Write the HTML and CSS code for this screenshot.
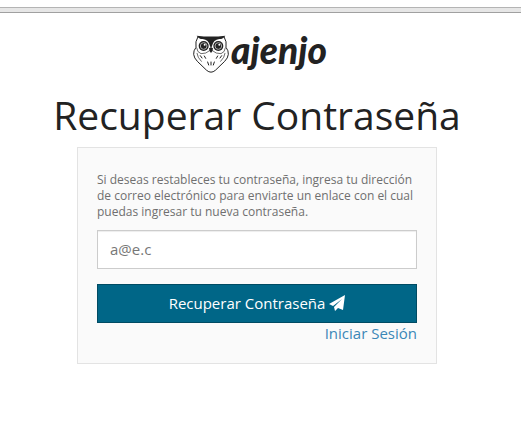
FILE: index.html
```html
<!DOCTYPE html>
<html lang="es">
<head>
<meta charset="utf-8">
<meta name="viewport" content="width=device-width, initial-scale=1">
<title>Recuperar Contraseña</title>
<link rel="stylesheet" href="styles.css">
</head>
<body>
<div class="topbar"></div>
<main class="page">
  <div class="logo">
    <svg class="owl" viewBox="0 0 114 120" aria-hidden="true">
      <g fill="none" stroke="#222" stroke-width="3" stroke-linecap="round" stroke-linejoin="round">
        <path d="M17 10Q9 22 12 40Q4 50 5 61Q6 72 16 82L44 109Q57 120 70 109L98 82Q108 72 109 61Q110 50 102 40Q105 22 97 10"/>
        <path d="M14 42Q15 55 27 59Q42 60 53 50M100 42Q99 55 87 59Q72 60 61 50" stroke-width="2"/>
        <path d="M15 58Q16 70 28 82M99 58Q98 70 86 82" stroke-width="2"/>
        <path d="M25 65l5 7M37 66l4 7M89 65l-5 7M77 66l-4 7M47 84l3 9M57 84v9M67 84l-3 9"/>
      </g>
      <path fill="#222" d="M14 5Q57 10 100 5Q94 15 82 15Q64 17 60 36L57 44L54 36Q50 17 32 15Q20 15 14 5Z"/>
      <path fill="#222" d="M51 43Q57 38 63 43Q63 51 57 57Q51 51 51 43Z"/>
      <circle cx="35" cy="36" r="15" fill="#222"/>
      <circle cx="79" cy="36" r="15" fill="#222"/>
      <g fill="none" stroke="#aaa" stroke-width="3">
        <circle cx="35" cy="36" r="10"/>
        <circle cx="79" cy="36" r="10"/>
      </g>
      <circle cx="38" cy="32" r="3" fill="#fff"/>
      <circle cx="82" cy="32" r="3" fill="#fff"/>
    </svg>
    <span class="wordmark">ajenjo</span>
  </div>
  <h1 class="title">Recuperar Contraseña</h1>
  <form class="panel">
    <label class="help" for="email">Si deseas restableces tu contraseña, ingresa tu dirección de correo electrónico para enviarte un enlace con el cual puedas ingresar tu nueva contraseña.</label>
    <input class="field" id="email" type="email" placeholder="a@e.c">
    <button class="submit" type="button">Recuperar Contraseña
      <svg class="plane" viewBox="0 0 16 16" aria-hidden="true"><path fill="#fff" d="M16 0L14 15L9 13L6 16L5 12L13 4L4 11L0 9Z"/></svg>
    </button>
    <a class="login" href="#">Iniciar Sesión</a>
  </form>
</main>
</body>
</html>
```
FILE: styles.css
```css
* {
  box-sizing: border-box;
}

body {
  margin: 0;
  background: #fff;
  color: #222;
  font-family: "Open Sans", sans-serif;
  font-size: 15px;
}

.topbar {
  height: 6px;
  margin-top: 7px;
  background: #e6e6e6;
  border-top: 1px solid #b4b4b4;
  border-bottom: 1px solid #a0a0a0;
}

.page {
  display: flex;
  flex-direction: column;
  align-items: center;
  padding: 21px 7px 0 0;
}

.logo {
  display: flex;
  gap: 1px;
  height: 40px;
  margin-left: 5px;
}

.owl {
  width: 38px;
  height: 40px;
}

.wordmark {
  font-family: Lato, sans-serif;
  font-size: 37px;
  font-style: italic;
  font-weight: 900;
  line-height: 32px;
}

.title {
  margin: 19px 0 10px;
  font-size: 39px;
  font-weight: 400;
  line-height: 44px;
  text-align: center;
}

.panel {
  display: flex;
  flex-direction: column;
  width: 100%;
  max-width: 360px;
  padding: 24px 19px 19px;
  background: #fafafa;
  border: 1px solid #e3e3e3;
}

.help {
  color: #6f6f6f;
  font-size: 12px;
  line-height: 16px;
}

.field {
  width: 100%;
  height: 39px;
  margin: 10px 0 15px;
  padding: 7px 12px 9px;
  background: #fff;
  border: 1px solid #ccc;
  border-radius: 0;
  box-shadow: inset 0 1px 1px rgba(0, 0, 0, 0.075);
  font: inherit;
}

.field::placeholder {
  color: #777;
}

.submit {
  display: flex;
  align-items: center;
  justify-content: center;
  gap: 4px;
  height: 39px;
  padding: 0 12px 2px;
  background: #006687;
  border: 1px solid #004b63;
  border-radius: 0;
  color: #fff;
  font: inherit;
}

.plane {
  width: 16px;
  height: 16px;
}

.login {
  align-self: flex-end;
  color: #3a87b7;
  line-height: 21px;
  text-decoration: none;
}
```
